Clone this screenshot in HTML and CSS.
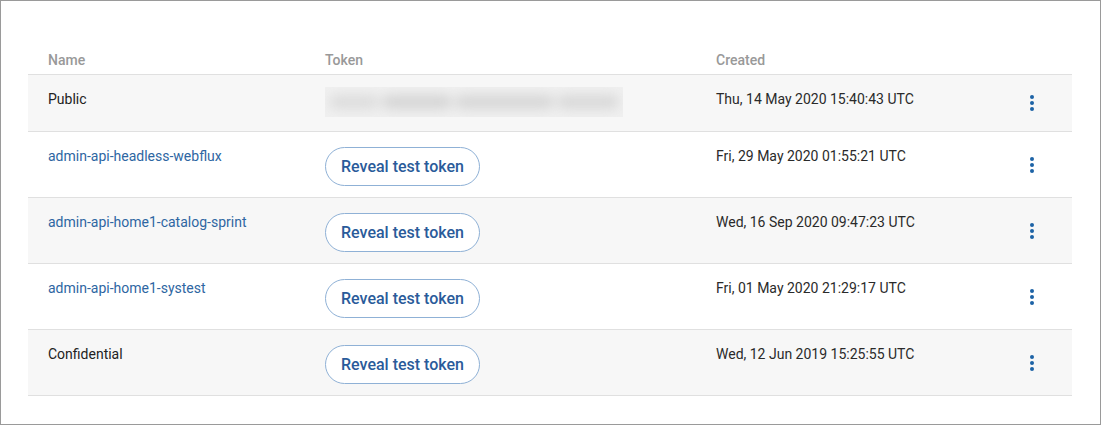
FILE: index.html
```html
<!DOCTYPE html>
<html>
<head>
<meta charset="utf-8">
<link rel="stylesheet" href="styles.css">
</head>
<body>
<div class="frame">
  <div class="table">
    <div class="row head">
      <div class="c name">Name</div>
      <div class="c token">Token</div>
      <div class="c created">Created</div>
      <div class="c menu"></div>
    </div>
    <div class="row shaded first">
      <div class="c name">Public</div>
      <div class="c token"><div class="blurbox"><div class="blurinner"><span class="b1"></span><span class="b2"></span><span class="b3"></span><span class="b4"></span></div></div></div>
      <div class="c created">Thu, 14 May 2020 15:40:43 UTC</div>
      <div class="c menu"><span class="kebab"><i></i><i></i><i></i></span></div>
    </div>
    <div class="row">
      <div class="c name"><a class="link">admin-api-headless-webflux</a></div>
      <div class="c token"><button class="reveal">Reveal test token</button></div>
      <div class="c created">Fri, 29 May 2020 01:55:21 UTC</div>
      <div class="c menu"><span class="kebab"><i></i><i></i><i></i></span></div>
    </div>
    <div class="row shaded">
      <div class="c name"><a class="link">admin-api-home1-catalog-sprint</a></div>
      <div class="c token"><button class="reveal">Reveal test token</button></div>
      <div class="c created">Wed, 16 Sep 2020 09:47:23 UTC</div>
      <div class="c menu"><span class="kebab"><i></i><i></i><i></i></span></div>
    </div>
    <div class="row">
      <div class="c name"><a class="link">admin-api-home1-systest</a></div>
      <div class="c token"><button class="reveal">Reveal test token</button></div>
      <div class="c created">Fri, 01 May 2020 21:29:17 UTC</div>
      <div class="c menu"><span class="kebab"><i></i><i></i><i></i></span></div>
    </div>
    <div class="row shaded">
      <div class="c name">Confidential</div>
      <div class="c token"><button class="reveal">Reveal test token</button></div>
      <div class="c created">Wed, 12 Jun 2019 15:25:55 UTC</div>
      <div class="c menu"><span class="kebab"><i></i><i></i><i></i></span></div>
    </div>
  </div>
</div>
</body>
</html>
```
FILE: styles.css
```css
* { box-sizing: border-box; }
html, body { margin: 0; padding: 0; background: #fff; }
body { font-family: Roboto, "Liberation Sans", sans-serif; font-size: 14px; color: #222; }
.frame {
  width: 1101px;
  height: 425px;
  border: 1px solid #9a9a9a;
  padding: 47px 28px 0 27px;
}
.table { width: 1044px; }
.row {
  display: grid;
  grid-template-columns: 277px 391px 280px 1fr;
  height: 66px;
  border-bottom: 1px solid #e0e0e0;
}
.row.first { height: 57px; }
.row.shaded { background: #f7f7f7; }
.row.head { height: 27px; }
.c { padding-left: 20px; padding-top: 16px; line-height: 16px; }
.row.head .c { color: #999; font-weight: 500; padding-top: 4px; }
.link { color: #2e66a2; text-decoration: none; }
.created { color: #2a2a2a; }
.blurbox {
  width: 298px;
  height: 30px;
  margin-top: -4px;
  background: #f0f0f0;
  overflow: hidden;
}
.blurinner {
  display: flex;
  align-items: center;
  height: 30px;
  gap: 3px;
  padding: 0 4px;
  filter: blur(6px);
}
.blurinner span { display: block; height: 14px; border-radius: 7px; }
.b1 { width: 50px; background: #dcdcdc; }
.b2 { width: 70px; background: #d4d4d4; }
.b3 { width: 100px; background: #d6d6d6; }
.b4 { width: 62px; background: #d8d8d8; }
.reveal {
  font-family: Roboto, "Liberation Sans", sans-serif;
  font-size: 16px;
  font-weight: 500;
  color: #2a5b9a;
  background: #fff;
  border: 1px solid #8fb1d6;
  border-radius: 20px;
  height: 39px;
  width: 155px;
  padding: 0;
  cursor: pointer;
}
.row .token { padding-top: 16px; }
.row:not(.first):not(.head) .token { padding-top: 16px; }
.reveal { margin-top: -1px; }
.menu { display: flex; align-items: center; padding: 0 0 0 54px; }
.row.head .menu { padding-top: 0; }
.kebab { display: flex; flex-direction: column; gap: 2px; }
.kebab i { display: block; width: 4px; height: 4px; border-radius: 50%; background: #1d63a6; }
```
